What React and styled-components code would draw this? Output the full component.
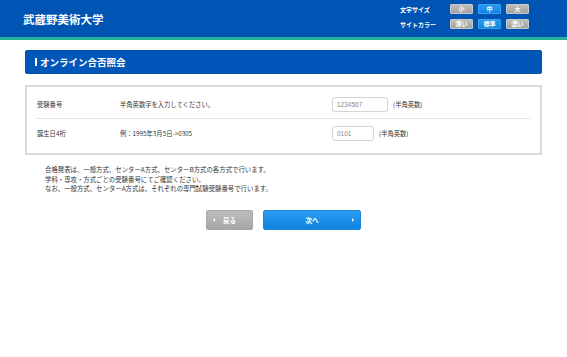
import React from "react";
import styled, { createGlobalStyle } from "styled-components";

const GlobalStyle = createGlobalStyle`
  html, body {
    margin: 0;
    padding: 0;
    background: #fff;
  }
  body {
    font-family: "Noto Sans CJK JP", "Noto Sans", "Liberation Sans", sans-serif;
    color: #333;
  }
`;

//Header
const Header = styled.header`
  height: 37px;
  background: #0054b4;
  border-bottom: 3px solid #26b09c;
  display: flex;
  justify-content: space-between;
  padding: 0 38px 0 23px;
`;

const Logo = styled.div`
  align-self: center;
  color: #fff;
  font-size: 11.5px;
  font-weight: bold;
  margin-top: 1px;
`;

const Controls = styled.div`
  display: grid;
  grid-template-columns: 45px repeat(3, 23px);
  column-gap: 5px;
  row-gap: 5px;
  align-items: center;
  padding-top: 4px;
  align-self: flex-start;
`;

const ControlLabel = styled.span`
  color: #fff;
  font-size: 6px;
  font-weight: bold;
  white-space: nowrap;
`;

const ToggleButton = styled.button`
  height: 10px;
  width: 23px;
  padding: 0;
  margin: 0;
  border: 1px solid ${(p) => (p.$active ? "#3aa3f0" : "#c9c9c9")};
  border-radius: 1px;
  background: ${(p) =>
    p.$active
      ? "linear-gradient(#2a9bf0, #1283e0)"
      : "linear-gradient(#bdbdbd, #a3a3a3)"};
  color: #fff;
  font-family: inherit;
  font-size: 6px;
  font-weight: bold;
  line-height: 8px;
  text-align: center;
`;

//Main
const Main = styled.main`
  padding: 10px 25px 0;
`;

const TitleBar = styled.h1`
  margin: 0 0 11px;
  height: 24px;
  box-sizing: border-box;
  background: #0057b9;
  border: 1px solid #0a4fa3;
  border-radius: 2px;
  display: flex;
  align-items: center;
  padding-left: 9px;
  gap: 3px;
  color: #fff;
  font-size: 9.5px;
  font-weight: bold;

  &::before {
    content: "";
    width: 2px;
    height: 8px;
    background: #fff;
  }
`;

const FormBox = styled.div`
  border: 2px solid #dadada;
  padding: 3px 10px 6px;
`;

const Row = styled.div`
  display: grid;
  grid-template-columns: 83px 212px auto;
  align-items: center;
  height: 28px;
  font-size: 6.3px;
  color: #333;
  & + & {
    border-top: 1px dotted #c8c8c8;
  }
`;

const Field = styled.div`
  display: flex;
  align-items: center;
  gap: 5px;
`;

const Input = styled.input`
  box-sizing: border-box;
  width: ${(p) => p.$w}px;
  height: 15px;
  padding: 0 4px;
  border: 1px solid #d4d4d4;
  border-radius: 3px;
  font-family: "Liberation Sans", sans-serif;
  font-size: 6.5px;
  color: #888;
  outline: none;
`;

const Notes = styled.div`
  margin-top: 10px;
  padding-left: 20px;
  font-size: 6.4px;
  line-height: 9.5px;
  color: #333;
  p {
    margin: 0;
  }
`;

const Buttons = styled.div`
  display: flex;
  justify-content: center;
  gap: 10px;
  margin-top: 16px;
`;

const NavButton = styled.button`
  position: relative;
  box-sizing: border-box;
  width: ${(p) => (p.$primary ? 98 : 47)}px;
  height: 20px;
  padding: 0;
  border: 1px solid ${(p) => (p.$primary ? "#1a86dc" : "#a8a8a8")};
  border-radius: 2px;
  background: ${(p) =>
    p.$primary
      ? "linear-gradient(#2a9cf0, #0f82e0)"
      : "linear-gradient(#bcbcbc, #a6a6a6)"};
  color: #fff;
  font-family: inherit;
  font-size: 6.5px;
  font-weight: bold;
  display: flex;
  align-items: center;
  justify-content: center;
`;

const Arrow = styled.span`
  position: absolute;
  top: 50%;
  margin-top: -2px;
  width: 0;
  height: 0;
  border-top: 2px solid transparent;
  border-bottom: 2px solid transparent;
  ${(p) =>
    p.$dir === "left"
      ? "left: 6px; border-right: 2px solid #fff;"
      : "right: 6px; border-left: 2px solid #fff;"}
`;

const App = () => {
  return (
    <>
      <GlobalStyle />
      <Header>
        <Logo>武蔵野美術大学</Logo>
        <Controls>
          <ControlLabel>文字サイズ</ControlLabel>
          <ToggleButton>小</ToggleButton>
          <ToggleButton $active>中</ToggleButton>
          <ToggleButton>大</ToggleButton>
          <ControlLabel>サイトカラー</ControlLabel>
          <ToggleButton>薄い</ToggleButton>
          <ToggleButton $active>標準</ToggleButton>
          <ToggleButton>濃い</ToggleButton>
        </Controls>
      </Header>
      <Main>
        <TitleBar>オンライン合否照会</TitleBar>
        <FormBox>
          <Row>
            <span>受験番号</span>
            <span>半角英数字を入力してください。</span>
            <Field>
              <Input $w={56} defaultValue="1234567" />
              <span>(半角英数)</span>
            </Field>
          </Row>
          <Row>
            <span>誕生日4桁</span>
            <span>例：1995年3月5日-&gt;0305</span>
            <Field>
              <Input $w={42} defaultValue="0101" />
              <span>(半角英数)</span>
            </Field>
          </Row>
        </FormBox>
        <Notes>
          <p>合格発表は、一般方式、センターA方式、センターB方式の各方式で行います。</p>
          <p>学科・専攻・方式ごとの受験番号にてご確認ください。</p>
          <p>なお、一般方式、センターA方式は、それぞれの専門試験受験番号で行います。</p>
        </Notes>
        <Buttons>
          <NavButton>
            <Arrow $dir="left" />
            戻る
          </NavButton>
          <NavButton $primary>
            次へ
            <Arrow $dir="right" />
          </NavButton>
        </Buttons>
      </Main>
    </>
  );
};

export default App;
